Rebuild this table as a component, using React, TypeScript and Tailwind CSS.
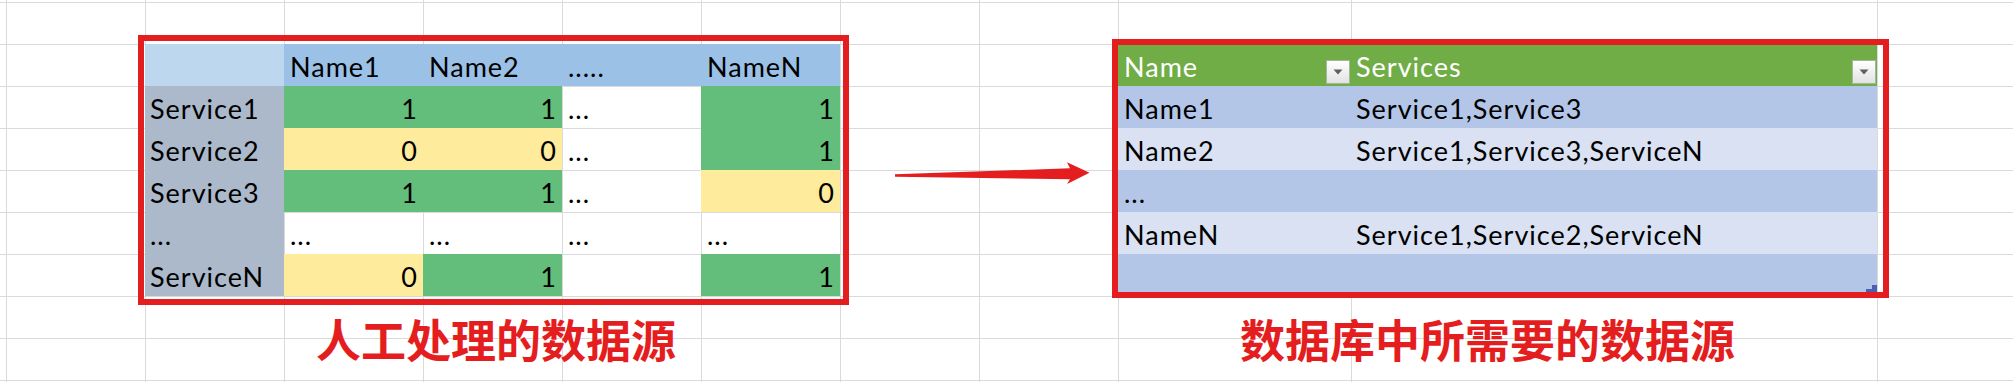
import React from "react";

type Fill = "g" | "y" | "w";

const fillClass: Record<Fill, string> = {
  g: "bg-[#63be7b]",
  y: "bg-[#ffeb9c]",
  w: "",
};

const matrix: { label: string; cells: [string, Fill][] }[] = [
  { label: "Service1", cells: [["1", "g"], ["1", "g"], ["...", "w"], ["1", "g"]] },
  { label: "Service2", cells: [["0", "y"], ["0", "y"], ["...", "w"], ["1", "g"]] },
  { label: "Service3", cells: [["1", "g"], ["1", "g"], ["...", "w"], ["0", "y"]] },
  { label: "...", cells: [["...", "w"], ["...", "w"], ["...", "w"], ["...", "w"]] },
  { label: "ServiceN", cells: [["0", "y"], ["1", "g"], ["", "w"], ["1", "g"]] },
];

const dbRows = [
  { name: "Name1", services: "Service1,Service3" },
  { name: "Name2", services: "Service1,Service3,ServiceN" },
  { name: "...", services: "" },
  { name: "NameN", services: "Service1,Service2,ServiceN" },
  { name: "", services: "" },
];

const sheetGrid =
  "grid grid-cols-[6px_repeat(8,139px)_233px_526px_1fr] grid-rows-[2px_repeat(9,42px)_1fr]";

const cellText = "text-[27px] leading-[27px] tracking-[1px] pb-[6px] whitespace-nowrap";

function FilterButton() {
  return (
    <div className="mb-[2px] mr-[1px] flex h-[24px] w-[24px] shrink-0 items-center justify-center border border-[#a3b79b] bg-linear-to-b from-white to-[#e2e2e2]">
      <svg width="10" height="6" viewBox="0 0 10 6">
        <polygon points="0.5,0.5 9.5,0.5 5,5.5" fill="#5f5f5f" />
      </svg>
    </div>
  );
}

function GridLines() {
  const cells = [];
  for (let r = 0; r < 11; r++) {
    for (let c = 0; c < 12; c++) {
      cells.push(
        <div
          key={`${r}-${c}`}
          className={`border-[#dadada] ${c > 0 ? "border-l" : ""} ${r > 0 ? "border-t" : ""}`}
        />
      );
    }
  }
  return <div className={`${sheetGrid} col-start-1 row-start-1 h-full`}>{cells}</div>;
}

function SourceMatrix() {
  return (
    <div className="col-start-3 col-end-8 row-start-3 row-end-9 grid grid-cols-5 grid-rows-6 text-black">
      <div className="bg-[#bdd7ee]" />
      {["Name1", "Name2", ".....", "NameN"].map((h) => (
        <div key={h} className={`flex items-end bg-[#9bc2e6] pl-[6px] ${cellText}`}>
          {h}
        </div>
      ))}
      {matrix.map((row) => (
        <React.Fragment key={row.label}>
          <div className={`flex items-end bg-[#acb9ca] pl-[5px] ${cellText}`}>{row.label}</div>
          {row.cells.map(([v, f], i) => (
            <div
              key={i}
              className={`flex items-end ${fillClass[f]} ${
                f === "w" ? "justify-start pl-[6px]" : "justify-end pr-[5px]"
              } ${cellText}`}
            >
              {v}
            </div>
          ))}
        </React.Fragment>
      ))}
    </div>
  );
}

function TargetTable() {
  return (
    <div className="col-start-10 col-end-12 row-start-3 row-end-9 grid grid-cols-[233px_1fr] grid-rows-6 text-black">
      <div className="flex items-end justify-between bg-[#70ad47] pl-[6px] text-white">
        <span className={cellText}>Name</span>
        <FilterButton />
      </div>
      <div className="flex items-end justify-between bg-[#70ad47] pl-[5px] text-white">
        <span className={cellText}>Services</span>
        <FilterButton />
      </div>
      {dbRows.map((row, i) => {
        const bg = i % 2 === 0 ? "bg-[#b4c6e7]" : "bg-[#d9e1f2]";
        const last = i === dbRows.length - 1;
        return (
          <React.Fragment key={i}>
            <div className={`flex items-end ${bg} pl-[6px] ${cellText}`}>{row.name}</div>
            <div className={`relative flex items-end ${bg} pl-[5px] ${cellText}`}>
              {row.services}
              {last && (
                <svg className="absolute bottom-[4px] right-0" width="11" height="7" viewBox="0 0 11 7">
                  <path d="M6 0H11V7H0V4H6Z" fill="#4b5fb4" />
                </svg>
              )}
            </div>
          </React.Fragment>
        );
      })}
    </div>
  );
}

function Annotations() {
  return (
    <div className={`${sheetGrid} col-start-1 row-start-1 h-full`}>
      <SourceMatrix />
      <TargetTable />
      <div className="col-start-3 col-end-8 row-start-9 row-end-11 flex items-center justify-center pl-[7px] text-[45px] font-bold leading-none text-[#e41e1e] [font-family:'Noto_Sans_CJK_SC',sans-serif]">
        人工处理的数据源
      </div>
      <div className="col-start-10 col-end-12 row-start-9 row-end-11 flex items-center justify-center pr-[20px] text-[45px] font-bold leading-none text-[#e41e1e] [font-family:'Noto_Sans_CJK_SC',sans-serif]">
        数据库中所需要的数据源
      </div>
    </div>
  );
}

export default function App() {
  return (
    <div className="relative grid h-[382px] w-[2013px] overflow-hidden bg-white [font-family:Lato,'Noto_Sans',sans-serif]">
      <GridLines />
      <Annotations />

      {/* red highlight frames */}
      <div className="pointer-events-none absolute left-[138px] top-[35px] h-[270px] w-[711px] border-[6px] border-[#e41e1e]" />
      <div className="pointer-events-none absolute left-[1112px] top-[39px] h-[259px] w-[777px] border-[6px] border-[#e41e1e]" />

      {/* arrow */}
      <svg className="absolute left-[890px] top-[158px]" width="205" height="30" viewBox="0 0 205 30">
        <polygon
          points="5,16.3 180,10.3 177,4.3 199.5,14.7 177,26 180,21.3 5,18.7"
          fill="#e41e1e"
        />
      </svg>
    </div>
  );
}
